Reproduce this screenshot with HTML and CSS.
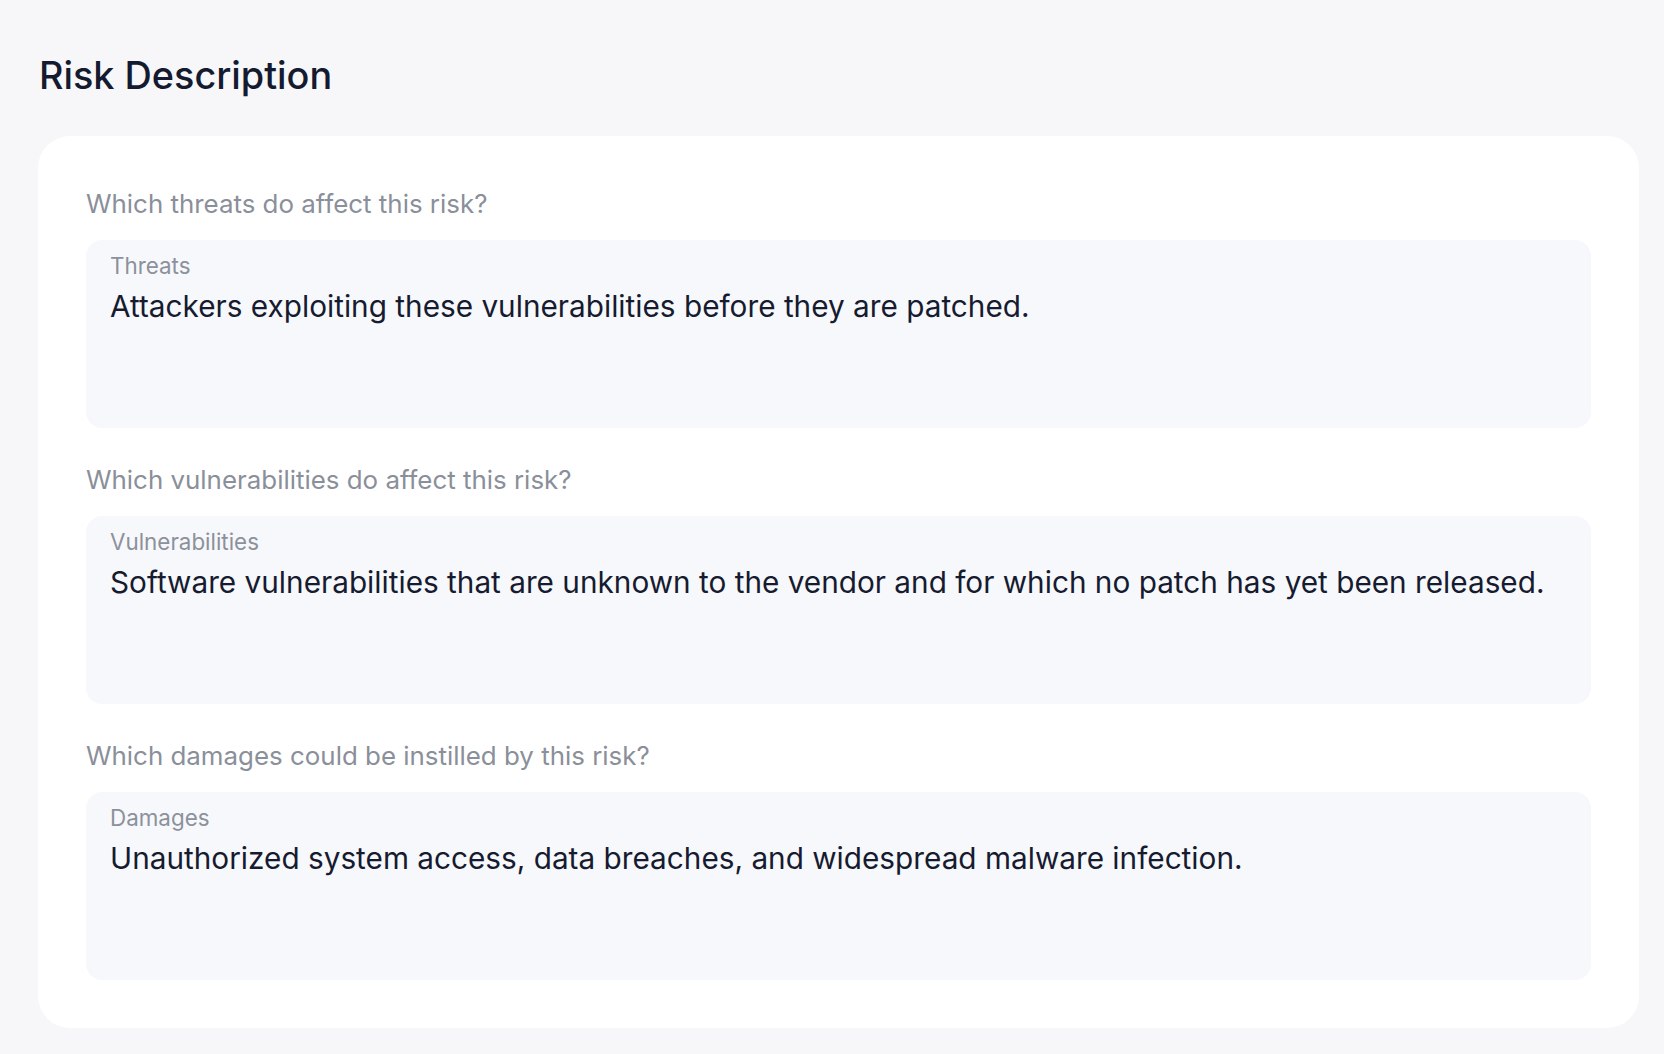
FILE: index.html
```html
<!DOCTYPE html>
<html lang="en">
<head>
<meta charset="utf-8">
<title>Risk Description</title>
<link rel="stylesheet" href="styles.css">
</head>
<body>
<main class="page">
  <h1 class="page-title">Risk Description</h1>
  <section class="card">
    <div class="field-group">
      <p class="question">Which threats do affect this risk?</p>
      <div class="field">
        <span class="field-label">Threats</span>
        <p class="field-value">Attackers exploiting these vulnerabilities before they are patched.</p>
      </div>
    </div>
    <div class="field-group">
      <p class="question">Which vulnerabilities do affect this risk?</p>
      <div class="field">
        <span class="field-label">Vulnerabilities</span>
        <p class="field-value">Software vulnerabilities that are unknown to the vendor and for which no patch has yet been released.</p>
      </div>
    </div>
    <div class="field-group">
      <p class="question">Which damages could be instilled by this risk?</p>
      <div class="field">
        <span class="field-label">Damages</span>
        <p class="field-value">Unauthorized system access, data breaches, and widespread malware infection.</p>
      </div>
    </div>
  </section>
</main>
</body>
</html>
```
FILE: styles.css
```css
* { box-sizing: border-box; }

html, body {
  margin: 0;
  padding: 0;
  background: #f7f7f9;
}

body {
  font-family: "Inter", "Noto Sans", sans-serif;
  color: #161b30;
}

.page {
  padding: 52px 25px 26px 38px;
}

.page-title {
  margin: 0 0 38px 1px;
  font-size: 37.8px;
  line-height: 46px;
  font-weight: 500;
  color: #141a2f;
  letter-spacing: 0;
}

.card {
  background: #ffffff;
  border-radius: 32px;
  padding: 51px 48px 48px 48px;
  display: flex;
  flex-direction: column;
  gap: 35px;
}

.field-group {
  display: flex;
  flex-direction: column;
  gap: 19px;
}

.question {
  margin: 0;
  font-size: 25.9px;
  line-height: 34px;
  font-weight: 400;
  color: #8a8f9a;
}

.field {
  background: #f7f8fb;
  border-radius: 16px;
  height: 188px;
  padding: 12px 24px 12px 24px;
  display: flex;
  flex-direction: column;
  gap: 6px;
}

.field-label {
  font-size: 22.4px;
  line-height: 28px;
  color: #8c919b;
}

.field-value {
  margin: 0;
  font-size: 29.75px;
  line-height: 40px;
  color: #161b30;
}
```
